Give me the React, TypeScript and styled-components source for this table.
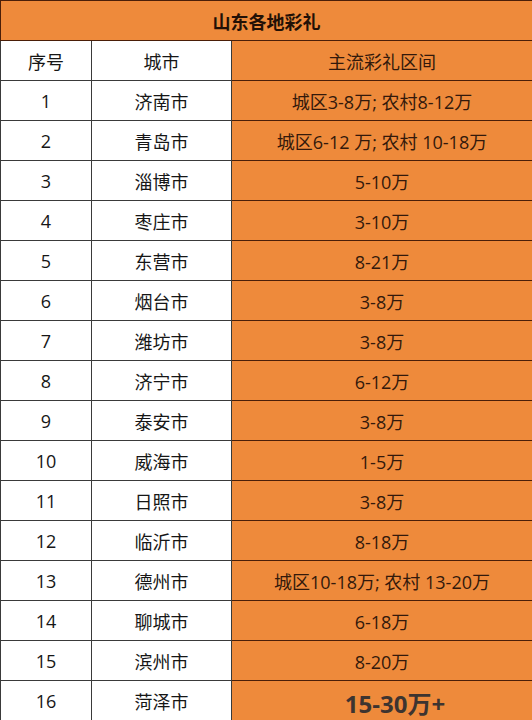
import styled, { createGlobalStyle } from "styled-components";

const GlobalStyle = createGlobalStyle`
  html, body {
    margin: 0;
    padding: 0;
    background: #ffffff;
  }
  body {
    font-family: "Open Sans", "Noto Sans CJK SC", sans-serif;
  }
`;

type Row = { no: number; city: string; range: string; big?: boolean };

const rows: Row[] = [
  { no: 1, city: "济南市", range: "城区3-8万; 农村8-12万" },
  { no: 2, city: "青岛市", range: "城区6-12 万; 农村 10-18万" },
  { no: 3, city: "淄博市", range: "5-10万" },
  { no: 4, city: "枣庄市", range: "3-10万" },
  { no: 5, city: "东营市", range: "8-21万" },
  { no: 6, city: "烟台市", range: "3-8万" },
  { no: 7, city: "潍坊市", range: "3-8万" },
  { no: 8, city: "济宁市", range: "6-12万" },
  { no: 9, city: "泰安市", range: "3-8万" },
  { no: 10, city: "威海市", range: "1-5万" },
  { no: 11, city: "日照市", range: "3-8万" },
  { no: 12, city: "临沂市", range: "8-18万" },
  { no: 13, city: "德州市", range: "城区10-18万; 农村 13-20万" },
  { no: 14, city: "聊城市", range: "6-18万" },
  { no: 15, city: "滨州市", range: "8-20万" },
  { no: 16, city: "菏泽市", range: "15-30万+", big: true },
];

const Table = styled.table`
  width: 532px;
  border-collapse: collapse;
  table-layout: fixed;
  font-size: 18px;
`;

const Col = styled.col<{ $w: number }>`
  width: ${(p) => p.$w}px;
`;

const TitleCell = styled.th`
  height: 39px;
  padding: 0;
  background: #ee8a3b;
  border: 1px solid #4a1e08;
  color: #221006;
  font-weight: 700;
  font-size: 18px;
  text-align: center;
  vertical-align: middle;
`;

const Cell = styled.td<{ $orange?: boolean }>`
  height: 39px;
  padding: 0;
  border: 1px solid ${(p) => (p.$orange ? "#4a1e08" : "#3a3a3a")};
  background: ${(p) => (p.$orange ? "#ee8a3b" : "#ffffff")};
  color: ${(p) => (p.$orange ? "#33190b" : "#161616")};
  text-align: center;
  vertical-align: middle;
  white-space: nowrap;
`;

const BigValue = styled.span`
  display: inline-block;
  padding-left: 26px;
  padding-top: 4px;
  font-size: 24px;
  font-weight: 700;
  color: #3d3430;
`;

export default function App() {
  return (
    <>
      <GlobalStyle />
      <Table>
        <colgroup>
          <Col $w={91} />
          <Col $w={140} />
          <Col $w={301} />
        </colgroup>
        <thead>
          <tr>
            <TitleCell colSpan={3}>山东各地彩礼</TitleCell>
          </tr>
        </thead>
        <tbody>
          <tr>
            <Cell>序号</Cell>
            <Cell>城市</Cell>
            <Cell $orange>主流彩礼区间</Cell>
          </tr>
          {rows.map((r) => (
            <tr key={r.no}>
              <Cell>{r.no}</Cell>
              <Cell>{r.city}</Cell>
              <Cell $orange>
                {r.big ? <BigValue>{r.range}</BigValue> : r.range}
              </Cell>
            </tr>
          ))}
        </tbody>
      </Table>
    </>
  );
}
